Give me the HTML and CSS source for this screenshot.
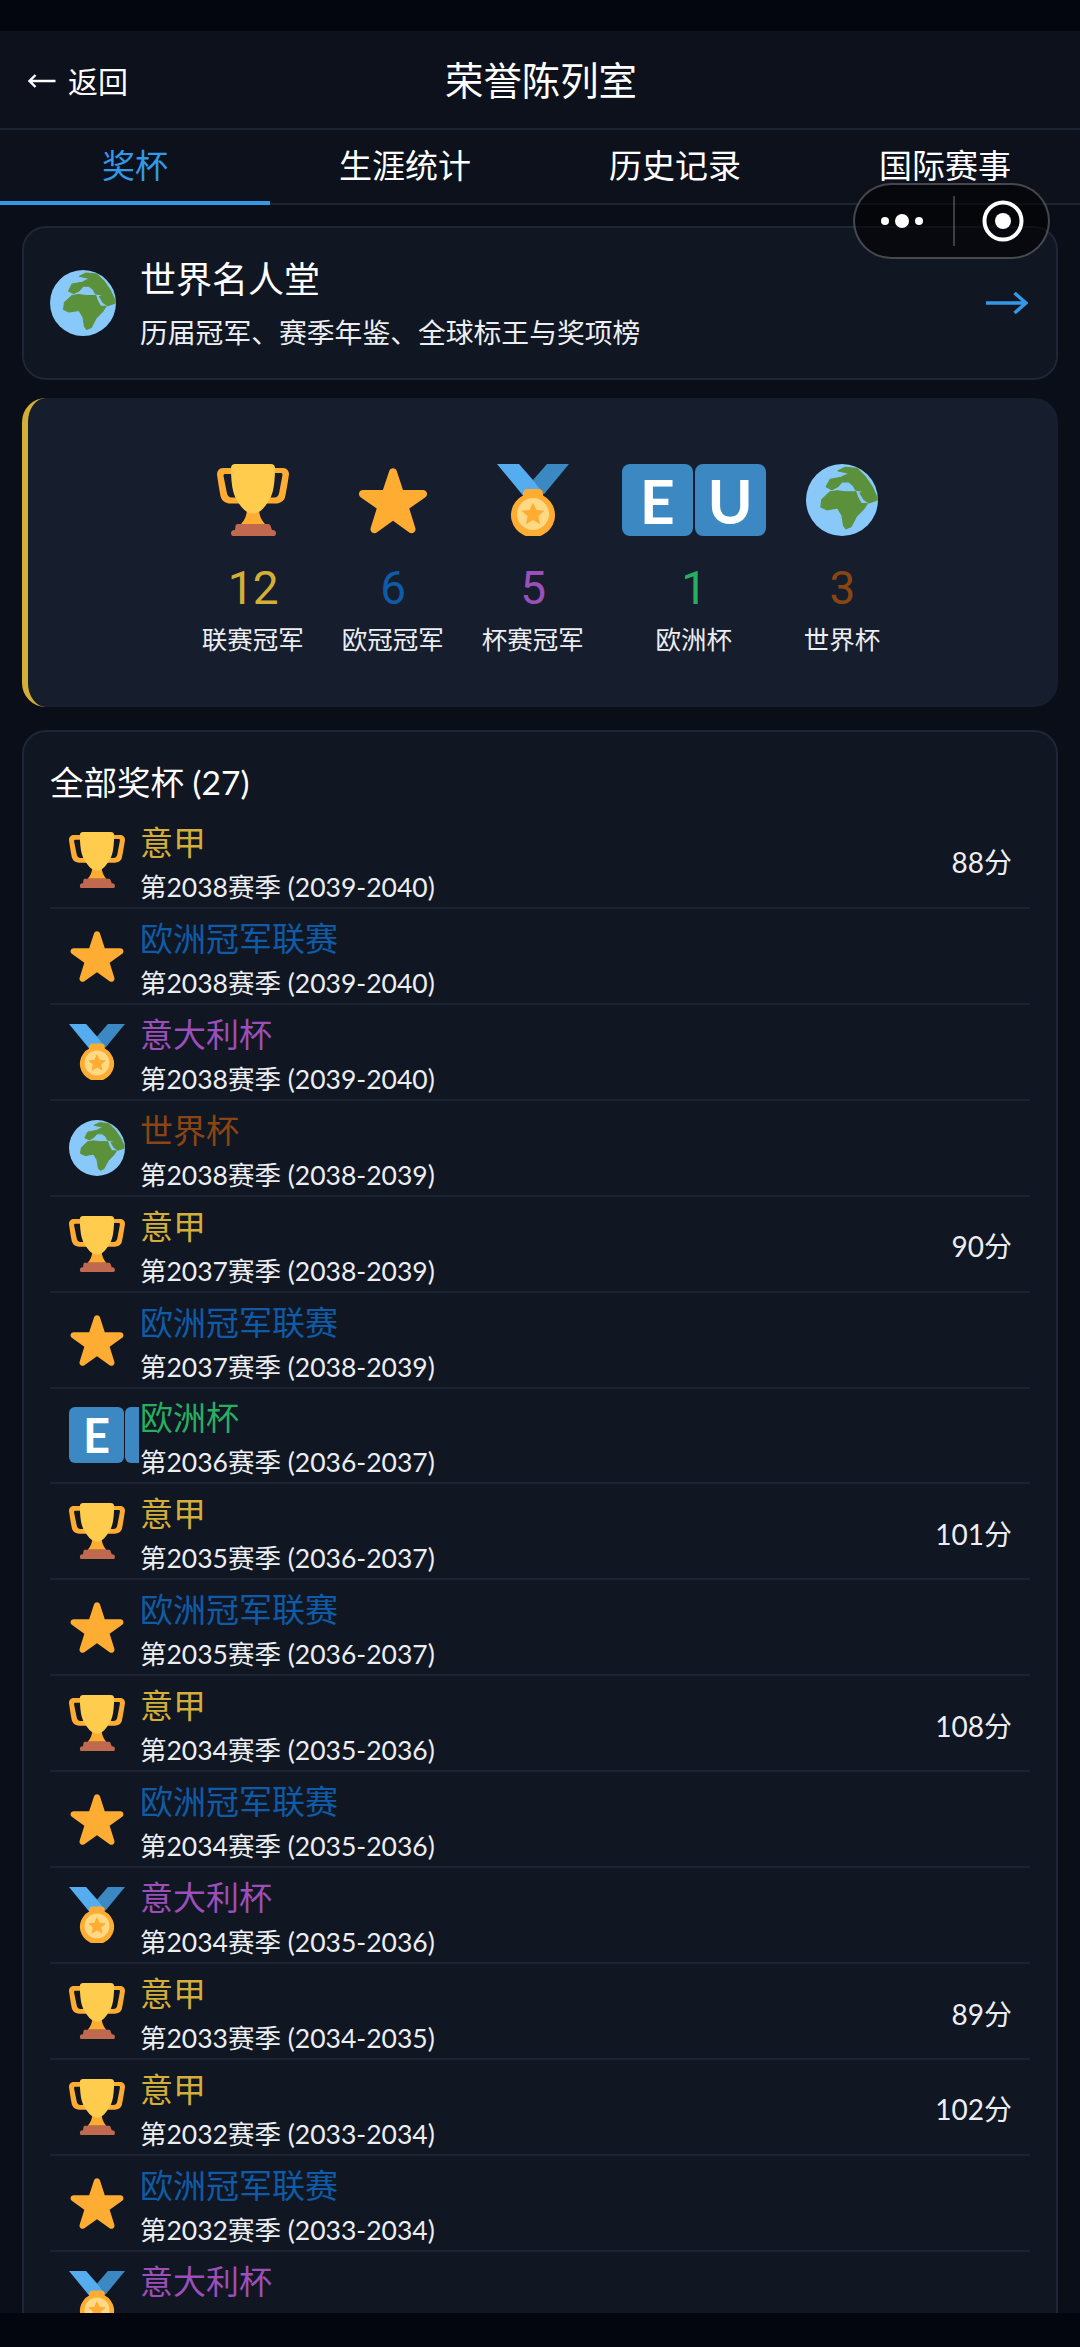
FILE: index.html
```html
<!DOCTYPE html>
<html lang="zh-CN">
<head>
<meta charset="utf-8">
<title>荣誉陈列室</title>
<link rel="stylesheet" href="styles.css">
</head>
<body>
<svg class="defs" aria-hidden="true">
  <symbol id="trophy" viewBox="0 0 36 36">
    <path fill="#FFAC33" d="M8 2H3C1 2 0 3.500 0 5.200c0 0 1.500 10 2 11.500.6 1.800 2.500 3 4.500 3H12v-3H7.500c-1.500 0-2.300-.8-2.600-2.500L3.300 6.300C3.100 5.100 3.600 5 4.300 5H8z"/>
    <path fill="#FFAC33" d="M28 2h5c2 0 3 1.500 3 3.200 0 0-1.500 10-2 11.500-.6 1.800-2.500 3-4.500 3H24v-3h4.500c1.500 0 2.300-.8 2.600-2.500l1.600-8.400c.2-1.200-.3-1.300-1-1.300H28z"/>
    <path fill="#FFAC33" d="M15 23h6c.2 2.500 1 5 3 7H12c2-2 2.800-4.500 3-7z"/>
    <path fill="#FFCC4D" d="M9 0h18c1.100 0 2 .7 2 2 0 5-.4 9-1.200 12-.9 3.500-3.200 6.500-5 8.500-.9 1-2.800 2.300-4.800 2.300s-3.900-1.300-4.800-2.300c-1.800-2-4.100-5-5-8.500C7.400 11 7 7 7 2c0-1.300.9-2 2-2z"/>
    <path fill="#C1694F" d="M10.500 30h15c.6 0 1 .3 1.200.8l.8 2.200h.5c.8 0 1.500.7 1.500 1.500s-.3 1.500-1 1.500H8c-.7 0-1-.7-1-1.500S7.700 33 8.500 33H9l.3-2.200c.1-.5.6-.8 1.200-.8z"/>
  </symbol>
  <symbol id="star" viewBox="0 0 36 36">
    <path fill="#FFAC33" d="M27.287 34.627c-.404 0-.806-.124-1.152-.371L18 28.422l-8.135 5.834c-.693.496-1.623.496-2.312-.008-.689-.499-.979-1.385-.721-2.194l3.034-9.792-8.062-5.681c-.685-.505-.97-1.393-.708-2.203.264-.808 1.016-1.357 1.866-1.363L12.947 13l3.179-9.549c.268-.809 1.023-1.353 1.874-1.353.851 0 1.606.545 1.875 1.353L23 13l10.036.015c.853.006 1.606.556 1.867 1.363.263.81-.022 1.698-.708 2.203l-8.062 5.681 3.034 9.792c.26.809-.033 1.695-.72 2.194-.347.254-.753.379-1.16.379z"/>
  </symbol>
  <symbol id="medal" viewBox="0 0 36 36">
    <path fill="#55ACEE" d="M18 8 11 0H0l14 17 11.500-4.700z"/>
    <path fill="#3B88C3" d="M25 0l-7 8 5.400 7.300L36 0z"/>
    <path fill="#FFAC33" d="M15 12.500h6c1.100 0 2 .9 2 2v1.300A11 11 0 1 1 13 15.800v-1.300c0-1.100.9-2 2-2z"/>
    <circle fill="#FFD983" cx="18" cy="25" r="8"/>
    <path fill="#FFAC33" d="M18 19.300l1.700 3.700 4 .4-3 2.700.9 4-3.600-2.100-3.600 2.100.9-4-3-2.700 4-.4z"/>
  </symbol>
  <symbol id="globe" viewBox="0 0 36 36">
    <circle fill="#88C9F9" cx="18" cy="18" r="18"/>
    <path class="land" d="M16 3.400 19.700 1.700 25.500 2.200 29.700 6.400 33.100 11.400 35.700 17.200 33.100 16.500 30.600 14 27.200 13.400 24.900 13.100 23.500 10.600 21.300 8.900 18 8.900 15.800 11.400 12.900 12.800 10.100 11.400 12.100 7.700 17.500 6.700 21.800 4.700 19.700 4.200z"/>
    <path class="land" d="M24.900 13.900 19.700 13.900 15.500 13.400 12.100 13.900 7.900 17.800 7.400 21.500 10.400 22.900 15.800 22 18 25.700 18.800 30.800 20 32.400 22.500 31.300 25.200 26.200 28.900 22.400 30.600 19.800 27.600 19.800 25.900 16.800z"/>
    <path class="land" d="M27 14.500 29 17.800 31.500 19.500 35.700 18 32.700 16 29.900 13.500z"/>
  </symbol>
</svg>

<div class="status"></div>
<main class="screen">
  <header class="nav">
    <div class="back">
      <svg class="back-arrow" viewBox="0 0 28 14"><path d="M27.500 7H1.500M7.500 1 1.500 7l6 6"/></svg>
      <span>返回</span>
    </div>
    <h1 class="nav-title">荣誉陈列室</h1>
  </header>
  <nav class="tabs">
    <div class="tab tab-on">奖杯</div>
    <div class="tab">生涯统计</div>
    <div class="tab">历史记录</div>
    <div class="tab">国际赛事</div>
  </nav>
  <div class="content">
    <section class="hall card">
      <svg class="hall-icon"><use href="#globe"/></svg>
      <div class="hall-text">
        <div class="hall-title">世界名人堂</div>
        <div class="hall-sub">历届冠军、赛季年鉴、全球标王与奖项榜</div>
      </div>
      <svg class="hall-arrow" viewBox="0 0 42 22"><path d="M0 11h40M28.500 1 40 11 28.500 21"/></svg>
    </section>

    <section class="summary">
      <div class="sum-item">
        <svg class="sum-icon"><use href="#trophy"/></svg>
        <div class="sum-num gold">12</div>
        <div class="sum-label">联赛冠军</div>
      </div>
      <div class="sum-item">
        <svg class="sum-icon"><use href="#star"/></svg>
        <div class="sum-num blue">6</div>
        <div class="sum-label">欧冠冠军</div>
      </div>
      <div class="sum-item">
        <svg class="sum-icon"><use href="#medal"/></svg>
        <div class="sum-num purple">5</div>
        <div class="sum-label">杯赛冠军</div>
      </div>
      <div class="sum-item">
        <div class="flag flag-big"><span class="tile">E</span><span class="tile">U</span></div>
        <div class="sum-num green">1</div>
        <div class="sum-label">欧洲杯</div>
      </div>
      <div class="sum-item">
        <svg class="sum-icon"><use href="#globe"/></svg>
        <div class="sum-num brown">3</div>
        <div class="sum-label">世界杯</div>
      </div>
    </section>

    <section class="list card">
      <h2 class="list-title">全部奖杯 (27)</h2>
      <div class="row"><div class="row-icon"><svg class="ri"><use href="#trophy"/></svg></div><div class="row-text"><div class="row-name gold">意甲</div><div class="row-sub">第2038赛季 (2039-2040)</div></div><div class="row-score">88分</div></div>
      <div class="row"><div class="row-icon"><svg class="ri"><use href="#star"/></svg></div><div class="row-text"><div class="row-name blue">欧洲冠军联赛</div><div class="row-sub">第2038赛季 (2039-2040)</div></div></div>
      <div class="row"><div class="row-icon"><svg class="ri"><use href="#medal"/></svg></div><div class="row-text"><div class="row-name purple">意大利杯</div><div class="row-sub">第2038赛季 (2039-2040)</div></div></div>
      <div class="row"><div class="row-icon"><svg class="ri"><use href="#globe"/></svg></div><div class="row-text"><div class="row-name brown">世界杯</div><div class="row-sub">第2038赛季 (2038-2039)</div></div></div>
      <div class="row"><div class="row-icon"><svg class="ri"><use href="#trophy"/></svg></div><div class="row-text"><div class="row-name gold">意甲</div><div class="row-sub">第2037赛季 (2038-2039)</div></div><div class="row-score">90分</div></div>
      <div class="row"><div class="row-icon"><svg class="ri"><use href="#star"/></svg></div><div class="row-text"><div class="row-name blue">欧洲冠军联赛</div><div class="row-sub">第2037赛季 (2038-2039)</div></div></div>
      <div class="row"><div class="row-icon"><div class="flag flag-small"><span class="tile">E</span><span class="tile tile-cut"></span></div></div><div class="row-text"><div class="row-name green">欧洲杯</div><div class="row-sub">第2036赛季 (2036-2037)</div></div></div>
      <div class="row"><div class="row-icon"><svg class="ri"><use href="#trophy"/></svg></div><div class="row-text"><div class="row-name gold">意甲</div><div class="row-sub">第2035赛季 (2036-2037)</div></div><div class="row-score">101分</div></div>
      <div class="row"><div class="row-icon"><svg class="ri"><use href="#star"/></svg></div><div class="row-text"><div class="row-name blue">欧洲冠军联赛</div><div class="row-sub">第2035赛季 (2036-2037)</div></div></div>
      <div class="row"><div class="row-icon"><svg class="ri"><use href="#trophy"/></svg></div><div class="row-text"><div class="row-name gold">意甲</div><div class="row-sub">第2034赛季 (2035-2036)</div></div><div class="row-score">108分</div></div>
      <div class="row"><div class="row-icon"><svg class="ri"><use href="#star"/></svg></div><div class="row-text"><div class="row-name blue">欧洲冠军联赛</div><div class="row-sub">第2034赛季 (2035-2036)</div></div></div>
      <div class="row"><div class="row-icon"><svg class="ri"><use href="#medal"/></svg></div><div class="row-text"><div class="row-name purple">意大利杯</div><div class="row-sub">第2034赛季 (2035-2036)</div></div></div>
      <div class="row"><div class="row-icon"><svg class="ri"><use href="#trophy"/></svg></div><div class="row-text"><div class="row-name gold">意甲</div><div class="row-sub">第2033赛季 (2034-2035)</div></div><div class="row-score">89分</div></div>
      <div class="row"><div class="row-icon"><svg class="ri"><use href="#trophy"/></svg></div><div class="row-text"><div class="row-name gold">意甲</div><div class="row-sub">第2032赛季 (2033-2034)</div></div><div class="row-score">102分</div></div>
      <div class="row"><div class="row-icon"><svg class="ri"><use href="#star"/></svg></div><div class="row-text"><div class="row-name blue">欧洲冠军联赛</div><div class="row-sub">第2032赛季 (2033-2034)</div></div></div>
      <div class="row"><div class="row-icon"><svg class="ri"><use href="#medal"/></svg></div><div class="row-text"><div class="row-name purple">意大利杯</div></div></div>
    </section>
  </div>
</main>
<div class="bottom"></div>

<div class="capsule">
  <svg class="cap-dots" viewBox="0 0 42 14"><circle cx="4" cy="7" r="4"/><circle cx="21" cy="7" r="7"/><circle cx="38" cy="7" r="4"/></svg>
  <span class="cap-line"></span>
  <svg class="cap-target" viewBox="0 0 42 42"><circle class="cap-ring" cx="21" cy="21" r="18.500"/><circle cx="21" cy="21" r="8"/></svg>
</div>
</body>
</html>
```

FILE: styles.css
```css
* { box-sizing: border-box; margin: 0; padding: 0; }
html, body { height: 100%; }
body {
  width: 1080px;
  height: 2347px;
  overflow: hidden;
  display: flex;
  flex-direction: column;
  background: #03050f;
  color: #fff;
  font-family: "Lato", "Noto Sans CJK SC", sans-serif;
}
.defs { width: 0; height: 0; position: absolute; }
.land { fill: #5c913b; stroke: #5c913b; stroke-width: 0.6; stroke-linejoin: round; }
.status { height: 31px; flex: none; background: #03050f; }
.bottom { height: 34px; flex: none; background: #03050f; }
.screen {
  flex: 1;
  min-height: 0;
  overflow: hidden;
  display: flex;
  flex-direction: column;
  background: #0a0e18;
}

.nav {
  height: 99px;
  flex: none;
  display: flex;
  align-items: center;
  justify-content: center;
  padding-bottom: 3px;
  padding-left: 2px;
  background: #0d111c;
  border-bottom: 2px solid #1c2333;
  position: relative;
}
.back {
  position: absolute;
  left: 28px;
  top: 0;
  bottom: 0;
  display: flex;
  align-items: center;
  gap: 12px;
  font-size: 30px;
}
.back-arrow { width: 28px; height: 14px; margin-top: 2px; fill: none; stroke: #fff; stroke-width: 2.400; }
.nav-title { font-size: 38.400px; font-weight: 400; }

.tabs {
  height: 75px;
  flex: none;
  display: grid;
  grid-template-columns: repeat(4, 1fr);
  background: #0d111c;
  border-bottom: 2px solid #1c2333;
}
.tab {
  display: flex;
  align-items: center;
  justify-content: center;
  font-size: 33px;
  height: 75px;
  padding-bottom: 4px;
  border-bottom: 4px solid transparent;
}
.tab-on { color: #3498e8; border-bottom-color: #3498e8; }

.content {
  display: flex;
  flex-direction: column;
  padding: 21px 22px 0;
}
.card {
  background: #111623;
  border: 2px solid #1f2636;
  border-radius: 24px;
}

.hall {
  height: 154px;
  flex: none;
  display: flex;
  align-items: center;
  padding: 0 28px 0 26px;
}
.hall-icon { width: 66px; height: 66px; flex: none; }
.hall-text { flex: 1; margin-left: 24px; }
.hall-title { font-size: 36px; line-height: 50px; }
.hall-sub { font-size: 27.800px; line-height: 40px; margin-top: 9px; color: #eceef2; }
.hall-arrow { width: 42px; height: 22px; fill: none; stroke: #3498e8; stroke-width: 3.500; }

.summary {
  height: 309px;
  flex: none;
  margin-top: 18px;
  display: flex;
  align-items: flex-start;
  justify-content: center;
  gap: 38px;
  padding: 66px 4px 0 0;
  background: #161d2d;
  border-left: 6px solid #d4af37;
  border-radius: 24px;
}
.sum-item { display: flex; flex-direction: column; align-items: center; }
.sum-icon { width: 72px; height: 72px; display: block; }
.sum-num { font-family: "Roboto", sans-serif; font-size: 46px; letter-spacing: -1px; line-height: 56px; margin-top: 24px; }
.sum-label { font-size: 25.500px; line-height: 36px; margin-top: 5px; color: #eceef2; }

.gold { color: #d4af37; }
.blue { color: #0f5ba6; }
.purple { color: #9b4fb8; }
.green { color: #27ae60; }
.brown { color: #8b4513; }

.flag { display: flex; overflow: hidden; flex: none; }
.flag-big { width: 144px; height: 72px; }
.tile {
  flex: none;
  display: flex;
  align-items: center;
  justify-content: center;
  background: #3b88c3;
  color: #fff;
  font-family: "Lato", sans-serif;
  font-weight: 700;
  border-radius: 8px;
}
.flag-big .tile { width: 71px; height: 72px; font-size: 61px; margin-right: 2px; }
.flag-small { width: 70px; height: 56px; }
.flag-small .tile { width: 55px; height: 56px; font-size: 47px; margin-right: 1px; border-radius: 6px; }

.list {
  flex: none;
  margin-top: 23px;
  padding: 0 26px 0 26px;
}
.list-title {
  font-size: 33.500px;
  font-weight: 400;
  line-height: 46px;
  padding-top: 27px;
  height: 81px;
}
.row {
  height: 95.930px;
  display: flex;
  align-items: center;
  padding: 0 18px 0 19px;
  border-bottom: 2px solid #1c2333;
}
.row-icon { width: 71px; flex: none; display: flex; align-items: center; }
.ri { width: 56px; height: 56px; display: block; }
.row-text { flex: 1; padding-top: 5px; }
.row-name { font-size: 33px; line-height: 44px; }
.row-sub { font-size: 26.500px; line-height: 36px; margin-top: 5px; color: #eceef2; }
.row-score { font-size: 28px; padding-top: 3px; color: #eceef2; }
.row:last-child .row-text { padding-top: 0; margin-top: -36px; }

.capsule {
  position: absolute;
  left: 853px;
  top: 183px;
  width: 197px;
  height: 76px;
  display: flex;
  align-items: center;
  border-radius: 38px;
  background: rgba(0, 0, 0, 0.55);
  border: 2px solid rgba(255, 255, 255, 0.26);
}
.cap-dots { width: 42px; height: 14px; margin-left: 26px; fill: #fff; }
.cap-line { width: 2px; height: 50px; margin-left: 30px; background: rgba(255, 255, 255, 0.22); }
.cap-target { width: 42px; height: 42px; margin-left: 27px; fill: #fff; }
.cap-ring { fill: none; stroke: #fff; stroke-width: 4; }
```
